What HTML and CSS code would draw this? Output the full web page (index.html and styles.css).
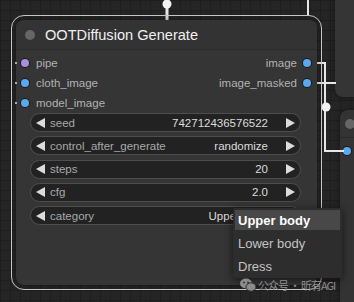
FILE: index.html
```html
<!DOCTYPE html>
<html lang="en">
<head>
  <meta charset="UTF-8">
  <title>OOTDiffusion Generate</title>
  <meta name="viewport" content="width=device-width, initial-scale=1.0">
  <link rel="stylesheet" href="styles.css">
</head>
<body>
  <div class="canvas">
    <!-- Neighbour nodes on the right -->
    <div class="node node-side-a"></div>
    <div class="node node-side-b">
      <div class="side-title"><span class="title-dot"></span></div>
      <div class="side-body"><span class="dot dot-image side-slot"></span></div>
    </div>

    <!-- Links -->
    <svg class="wires" width="354" height="302" viewBox="0 0 354 302">
      <g stroke="#e6e6e6" stroke-width="2" fill="none">
        <line x1="167" y1="0" x2="167" y2="20" stroke-width="3"/>
        <line x1="308" y1="0" x2="308" y2="16"/>
        <polyline points="311,63 325,63 325,151 344,151"/>
        <line x1="311" y1="83" x2="336" y2="83"/>
      </g>
      <circle cx="167" cy="4" r="4.5" fill="#f2f2f2"/>
      <circle cx="326" cy="107" r="4.5" fill="#f2f2f2"/>
    </svg>

    <!-- Main node -->
    <div class="node node-main">
      <div class="node-title">
        <span class="title-dot"></span>
        <span class="title-text">OOTDiffusion Generate</span>
      </div>
      <div class="slots">
        <div class="slot-col inputs">
          <div class="slot"><span class="dot dot-pipe"></span>pipe</div>
          <div class="slot"><span class="dot dot-image"></span>cloth_image</div>
          <div class="slot"><span class="dot dot-image"></span>model_image</div>
        </div>
        <div class="slot-col outputs">
          <div class="slot">image<span class="dot dot-image"></span></div>
          <div class="slot">image_masked<span class="dot dot-image"></span></div>
        </div>
      </div>
      <div class="widgets">
        <div class="widget">
          <span class="arr arr-left"></span><span class="w-label">seed</span>
          <span class="w-value">742712436576522</span><span class="arr arr-right"></span>
        </div>
        <div class="widget">
          <span class="arr arr-left"></span><span class="w-label">control_after_generate</span>
          <span class="w-value">randomize</span><span class="arr arr-right"></span>
        </div>
        <div class="widget">
          <span class="arr arr-left"></span><span class="w-label">steps</span>
          <span class="w-value">20</span><span class="arr arr-right"></span>
        </div>
        <div class="widget">
          <span class="arr arr-left"></span><span class="w-label">cfg</span>
          <span class="w-value">2.0</span><span class="arr arr-right"></span>
        </div>
        <div class="widget">
          <span class="arr arr-left"></span><span class="w-label">category</span>
          <span class="w-value">Upper body</span><span class="arr arr-right"></span>
        </div>
      </div>
    </div>

    <!-- Combo dropdown -->
    <div class="menu">
      <div class="menu-item active">Upper body</div>
      <div class="menu-item">Lower body</div>
      <div class="menu-item">Dress</div>
    </div>

    <div class="watermark">
      <svg width="16" height="14" viewBox="0 0 16 14">
        <ellipse cx="6" cy="5.5" rx="6" ry="5" fill="#8c8c8c"/>
        <ellipse cx="11" cy="9" rx="5" ry="4.2" fill="#8c8c8c" stroke="#2a2a2a" stroke-width="1"/>
        <circle cx="4" cy="4.5" r="0.9" fill="#2a2a2a"/>
        <circle cx="8" cy="4.5" r="0.9" fill="#2a2a2a"/>
      </svg>
      <span>公众号 · 昕有AGI</span>
    </div>
  </div>
</body>
</html>
```

FILE: styles.css
```css
body {
  margin: 0;
  background: #242424;
  font-family: "Liberation Sans", Arial, sans-serif;
}
.canvas {
  position: relative;
  width: 354px;
  height: 302px;
  overflow: hidden;
  background-color: #252525;
  background-image:
    linear-gradient(#1e1e1e 1px, transparent 1px),
    linear-gradient(90deg, #1e1e1e 1px, transparent 1px);
  background-size: 10px 10px;
}
.wires {
  position: absolute;
  left: 0;
  top: 0;
}
/* Nodes */
.node {
  position: absolute;
  background: #353535;
  border-radius: 8px;
  box-shadow: 0 0 6px rgba(0,0,0,0.45);
}
.node-side-a {
  left: 335px;
  top: -12px;
  width: 40px;
  height: 109px;
}
.node-side-b {
  left: 340px;
  top: 110px;
  width: 40px;
  height: 200px;
  background: #333;
}
.side-title {
  height: 28px;
  display: flex;
  align-items: center;
  padding-left: 5px;
  border-bottom: 1px solid #2a2a2a;
  box-sizing: border-box;
}
.side-slot {
  display: block;
  margin: 9px 0 0 3px;
}
.node-main {
  left: 16px;
  top: 20px;
  width: 301px;
  height: 265px;
  display: flex;
  flex-direction: column;
  outline: 1.5px solid #c6c6c6;
  outline-offset: 4px;
}
.node-title {
  height: 30px;
  box-sizing: border-box;
  display: flex;
  align-items: center;
  gap: 10px;
  padding-left: 9px;
  background: #333;
  border-radius: 8px 8px 0 0;
  border-bottom: 1px solid #2c2c2c;
}
.title-dot {
  width: 10px;
  height: 10px;
  border-radius: 50%;
  background: #666;
}
.title-text {
  color: #f0f0f0;
  font-size: 14.6px;
}
/* Slots */
.slots {
  display: flex;
  justify-content: space-between;
  height: 63px;
  box-sizing: border-box;
  padding: 3px 6px 0 5px;
}
.slot {
  position: relative;
  height: 20px;
  display: flex;
  align-items: center;
  gap: 7px;
  font-size: 11.5px;
  color: #b2b2b2;
}
.inputs .slot::before {
  content: "";
  position: absolute;
  left: -6px;
  top: 9px;
  width: 2px;
  height: 2px;
  border-radius: 50%;
  background: #d8d8d8;
}
.outputs .slot {
  justify-content: flex-end;
  gap: 6px;
}
.dot {
  width: 8px;
  height: 8px;
  border-radius: 50%;
  box-shadow: 0 0 0 1px #1c1c1c;
}
.dot-pipe { background: #a690dc; }
.dot-image { background: #5aa9ef; }
/* Widgets */
.widgets {
  display: flex;
  flex-direction: column;
  gap: 4.3px;
  padding: 0 16px 0 14px;
}
.widget {
  height: 19px;
  box-sizing: border-box;
  display: flex;
  align-items: center;
  padding: 0 5px;
  background: #222;
  border: 1px solid #4d4d4d;
  border-radius: 10px;
  font-size: 11.5px;
}
.arr {
  width: 0;
  height: 0;
  border-top: 5px solid transparent;
  border-bottom: 5px solid transparent;
}
.arr-left { border-right: 9px solid #dcdcdc; }
.arr-right { border-left: 9px solid #dcdcdc; }
.w-label {
  flex: 1;
  margin-left: 5px;
  color: #a8a8a8;
}
.w-value {
  margin-right: 18px;
  color: #dcdcdc;
}
/* Dropdown */
.menu {
  position: absolute;
  left: 233px;
  top: 208px;
  width: 109px;
  box-sizing: border-box;
  padding: 2px;
  display: flex;
  flex-direction: column;
  gap: 3px;
  background: #2d2d2d;
  box-shadow: 0 2px 8px rgba(0,0,0,0.6);
  border-radius: 2px;
}
.menu-item {
  height: 20px;
  display: flex;
  align-items: center;
  padding-left: 3px;
  font-size: 13px;
  color: #c4c4c4;
}
.menu-item.active {
  background: #484848;
  color: #fff;
  font-weight: bold;
}
.watermark {
  position: absolute;
  left: 240px;
  top: 277px;
  display: flex;
  align-items: center;
  gap: 2px;
  font-family: "Noto Sans CJK SC", sans-serif;
  font-size: 11px;
  letter-spacing: -1px;
  color: #8e8e8e;
}
```
